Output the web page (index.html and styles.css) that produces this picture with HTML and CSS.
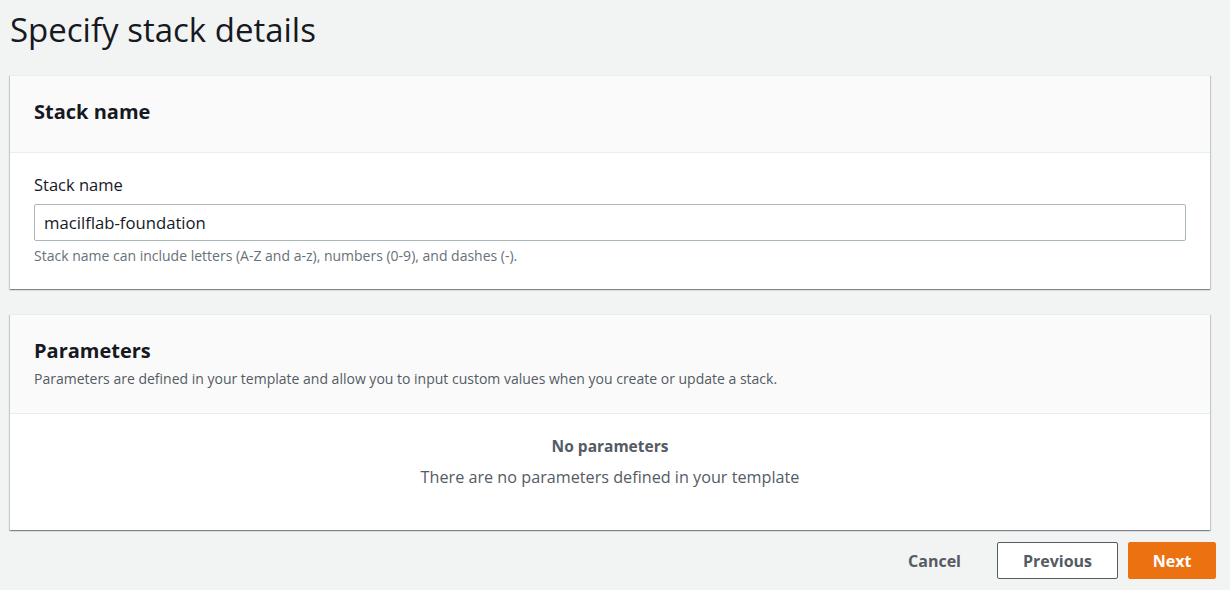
FILE: index.html
```html
<!DOCTYPE html>
<html>
<head>
<meta charset="utf-8">
<link rel="stylesheet" href="styles.css">
</head>
<body>
<main class="page">
  <h1 class="title">Specify stack details</h1>

  <section class="card">
    <div class="card-header">
      <h2 class="card-title">Stack name</h2>
    </div>
    <div class="card-body">
      <label class="label" for="sn">Stack name</label>
      <input id="sn" class="input" type="text" value="macilflab-foundation">
      <p class="hint">Stack name can include letters (A-Z and a-z), numbers (0-9), and dashes (-).</p>
    </div>
  </section>

  <section class="card last">
    <div class="card-header params">
      <h2 class="card-title">Parameters</h2>
      <p class="desc">Parameters are defined in your template and allow you to input custom values when you create or update a stack.</p>
    </div>
    <div class="card-body empty">
      <div class="empty-title">No parameters</div>
      <div class="empty-text">There are no parameters defined in your template</div>
    </div>
  </section>

  <div class="actions">
    <button class="btn link">Cancel</button>
    <button class="btn normal">Previous</button>
    <button class="btn primary">Next</button>
  </div>
</main>
</body>
</html>
```

FILE: styles.css
```css
* { box-sizing: border-box; }
html, body { margin: 0; padding: 0; }
body {
  background: #f2f3f3;
  font-family: "Open Sans", "Noto Sans", Arial, sans-serif;
  color: #16191f;
  width: 1230px;
  height: 590px;
  overflow: hidden;
}
.page {
  padding: 0 14px 0 10px;
}
.title {
  margin: 0;
  padding-top: 10px;
  height: 75px;
  font-size: 33px;
  font-weight: 400;
  line-height: 40px;
  color: #16191f;
}
.card {
  margin-right: 6px;
  background: #fff;
  border-top: 1px solid #eaeded;
  box-shadow: 0 1px 1px 0 rgba(0,28,36,.3), 1px 1px 1px 0 rgba(0,28,36,.15), -1px 1px 1px 0 rgba(0,28,36,.15);
  margin-bottom: 25px;
}
.card.last {
  margin-bottom: 12px;
}
.card-header {
  background: #fafafa;
  border-bottom: 1px solid #eaeded;
  height: 77px;
  padding: 0 24px 5px;
  display: flex;
  flex-direction: column;
  justify-content: center;
}
.card-header.params {
  height: 99px;
  justify-content: flex-start;
  padding: 22px 24px 0;
}
.card-title {
  margin: 0;
  font-size: 20px;
  font-weight: 700;
  line-height: 28px;
}
.desc {
  margin: 5px 0 0;
  font-size: 14px;
  line-height: 18px;
  color: #545b64;
}
.card-body {
  padding: 21px 24px 24px;
}
.label {
  display: block;
  font-size: 16.5px;
  line-height: 22px;
  color: #16191f;
  margin-bottom: 8px;
}
.input {
  display: block;
  width: 100%;
  height: 37px;
  border: 1px solid #aab7b8;
  border-radius: 2px;
  padding: 0 9px;
  font-family: inherit;
  font-size: 16.7px;
  color: #16191f;
  background: #fff;
}
.hint {
  margin: 6px 0 0;
  font-size: 14px;
  line-height: 18px;
  color: #687078;
}
.card-body.empty {
  text-align: center;
  padding: 21px 24px 42px;
  color: #545b64;
}
.empty-title {
  font-weight: 700;
  font-size: 15.5px;
  line-height: 22px;
}
.empty-text {
  font-size: 16.2px;
  line-height: 22px;
  margin-top: 9px;
}
.actions {
  display: flex;
  justify-content: flex-end;
  align-items: center;
  gap: 10px;
}
.btn {
  font-family: inherit;
  font-size: 16px;
  font-weight: 700;
  height: 37px;
  border-radius: 2px;
  padding: 0 20px;
  cursor: pointer;
}
.btn.link {
  background: transparent;
  border: 1px solid transparent;
  color: #545b64;
  margin-right: 5px;
}
.btn.normal {
  background: #fff;
  border: 1px solid #545b64;
  color: #545b64;
  width: 121px;
}
.btn.primary {
  background: #ec7211;
  border: 1px solid #ec7211;
  color: #fff;
  width: 88px;
}
```
